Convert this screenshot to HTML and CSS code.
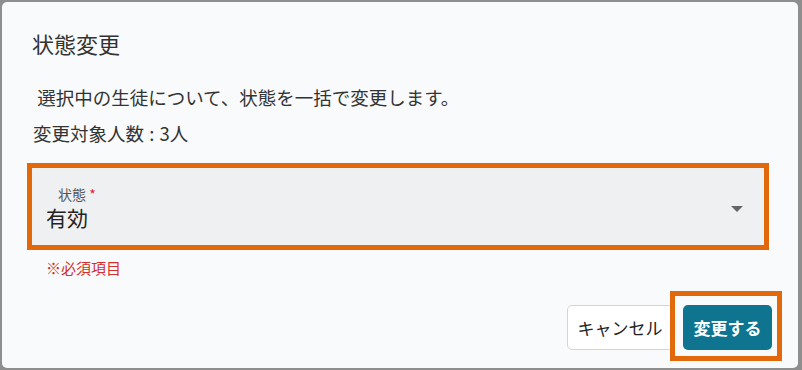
FILE: index.html
```html
<!DOCTYPE html>
<html lang="ja">
<head>
<meta charset="utf-8">
<link rel="stylesheet" href="styles.css">
</head>
<body>
<div class="dialog">
  <h2 class="title">状態変更</h2>
  <div class="body">
    <p class="desc">&nbsp;選択中の生徒について、状態を一括で変更します。</p>
    <p class="count">変更対象人数 <span class="colon">:</span> 3人</p>
    <div class="field-wrap">
      <div class="field">
        <div class="field-text">
          <span class="label">状態 <span class="req">*</span></span>
          <span class="value">有効</span>
        </div>
        <svg class="caret" width="12" height="6" viewBox="0 0 12 6"><path d="M0 0 L12 0 L6 6 Z" fill="#666"/></svg>
      </div>
      <div class="highlight field-hl"></div>
    </div>
    <p class="hint">※必須項目</p>
  </div>
  <div class="actions">
    <button class="btn cancel">キャンセル</button>
    <div class="confirm-wrap">
      <button class="btn confirm">変更する</button>
      <div class="highlight btn-hl"></div>
    </div>
  </div>
</div>
</body>
</html>
```
FILE: styles.css
```css
* { box-sizing: border-box; }
html, body { margin: 0; padding: 0; }
body {
  width: 802px;
  height: 370px;
  background: #8e8e8e;
  padding: 2px 4px 2px 2px;
  font-family: "Noto Sans CJK JP", "Noto Sans", sans-serif;
  color: #222;
}
.dialog {
  background: #f9fafb;
  border-radius: 5px;
  height: 366px;
  display: flex;
  flex-direction: column;
}
.title {
  margin: 0;
  padding: 26px 30px 0 30px;
  font-size: 22px;
  font-weight: 400;
  line-height: 30px;
  color: #333;
}
.body {
  padding: 3px 29px 0 25px;
}
.desc {
  margin: 24px 0 0 6px;
  font-size: 18.5px;
  line-height: 24px;
  color: #333;
}
.count {
  margin: 12px 0 0 6px;
  font-size: 18.5px;
  line-height: 24px;
  color: #333;
}
.colon { margin: 0 1px; }
.field-wrap {
  position: relative;
  margin-top: 18px;
}
.field {
  background: #eff0f1;
  height: 87px;
  margin: 0 1px;
  border-radius: 4px 4px 0 0;
  display: flex;
  align-items: center;
  padding: 0 25px 0 18px;
}
.field-text {
  flex: 1;
  display: flex;
  flex-direction: column;
  gap: 3px;
  padding-top: 2px;
}
.label {
  font-size: 14px;
  line-height: 16px;
  color: #555;
  margin-left: 12px;
}
.req { color: #d23; }
.value {
  font-size: 21px;
  line-height: 24px;
  color: #222;
}
.caret { margin-top: 4px; }
.highlight {
  position: absolute;
  border: 5px solid #e2690b;
  pointer-events: none;
}
.field-hl { inset: 0 0 0 0; }
.hint {
  margin: 8px 0 0 19px;
  font-size: 15px;
  line-height: 20px;
  color: #d32f2f;
}
.actions {
  margin-top: auto;
  padding: 0 26px 18px 0;
  display: flex;
  justify-content: flex-end;
  align-items: center;
  gap: 10px;
}
.btn {
  font-family: inherit;
  font-size: 17px;
  height: 45px;
  border-radius: 5px;
  padding: 0 8px;
  cursor: pointer;
}
.cancel {
  background: #fff;
  border: 1px solid #d4d4d4;
  color: #222;
  width: 106px;
}
.confirm-wrap { position: relative; }
.confirm {
  background: #0e7490;
  color: #fff;
  border: none;
  font-weight: 700;
  width: 89px;
}
.btn-hl {
  left: -13px;
  right: -10px;
  top: -14px;
  bottom: -11px;
}
```
